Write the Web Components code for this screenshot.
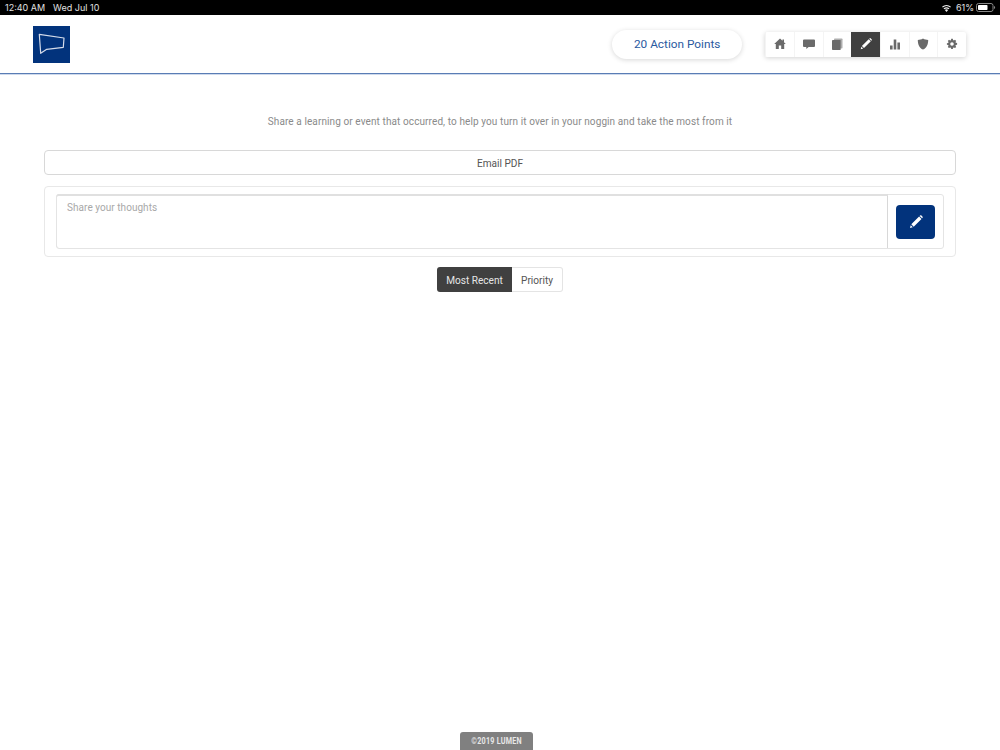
<!DOCTYPE html>
<html>
<head>
<meta charset="utf-8">
<title>Lumen</title>
<style>
  html, body { margin: 0; height: 100%; background: #fff; }
  body { font-family: Roboto, "Liberation Sans", sans-serif; }
</style>
</head>
<body>
<app-page>
  <status-bar></status-bar>
  <app-header></app-header>
  <journal-view></journal-view>
  <app-footer>©2019 LUMEN</app-footer>
</app-page>

<script>
class AppPage extends HTMLElement {
  constructor() {
    super();
    this.attachShadow({ mode: "open" });
    this.shadowRoot.innerHTML = `
      <style>
        :host { display: flex; flex-direction: column; height: 750px; overflow: hidden; }
        ::slotted(journal-view) { flex: 1; }
      </style>
      <slot></slot>`;
  }
}

class StatusBar extends HTMLElement {
  constructor() {
    super();
    this.attachShadow({ mode: "open" });
    this.shadowRoot.innerHTML = `
      <style>
        :host {
          display: flex; align-items: center; justify-content: space-between;
          height: 15px; background: #000; color: #e0e0e0;
          font: 9px/15px "Inter", "Liberation Sans", sans-serif;
          padding: 0 4px 0 5px;
        }
        .left span + span { margin-left: 8px; }
        .right { display: flex; align-items: center; }
        .right span { margin: 0 2px 0 4px; }
        svg { display: block; }
      </style>
      <div class="left"><span>12:40 AM</span><span>Wed Jul 10</span></div>
      <div class="right">
        <svg width="11" height="8" viewBox="0 0 11 8">
          <path d="M5.5 8 3.9 6a2.4 2.4 0 0 1 3.2 0Z" fill="#eee"/>
          <path d="M2.9 4.9a4 4 0 0 1 5.2 0M1.4 3.1a6.2 6.2 0 0 1 8.2 0" fill="none" stroke="#eee" stroke-width="1.2"/>
        </svg>
        <span>61%</span>
        <svg width="20" height="9" viewBox="0 0 20 9">
          <rect x=".5" y=".5" width="16.5" height="8" rx="2" fill="none" stroke="#888"/>
          <rect x="2" y="2" width="9.5" height="5" rx=".8" fill="#fff"/>
          <path d="M18 3v3a1.6 1.6 0 0 0 0-3Z" fill="#888"/>
        </svg>
      </div>`;
  }
}

class AppLogo extends HTMLElement {
  constructor() {
    super();
    this.attachShadow({ mode: "open" });
    this.shadowRoot.innerHTML = `
      <style>
        :host { display: block; width: 37px; height: 37px; background: #02337c; }
        svg { display: block; }
      </style>
      <svg width="37" height="37" viewBox="0 0 37 37">
        <path d="M6.300 8.300 31 12 30.300 21.300 13.700 23.300 7.700 27.300Z" fill="none" stroke="#d5dcea" stroke-width="1.2" stroke-linejoin="round"/>
      </svg>`;
  }
}

class NavIcons extends HTMLElement {
  constructor() {
    super();
    this.attachShadow({ mode: "open" });
    const icons = [
      `<path d="M7 1.500 1.200 7h1.600v5h3V8.600h2.400V12h3V7h1.600L11 5.200V2.500H9.500v1.300Z"/>`,
      `<path d="M2 2.500h10a1 1 0 0 1 1 1v5.600a1 1 0 0 1-1 1H6.600l-2.300 2v-2H2a1 1 0 0 1-1-1V3.500a1 1 0 0 1 1-1Z"/>`,
      `<rect x="4" y="1.500" width="8.500" height="10" rx=".8" opacity=".55"/><path d="M2.800 3h7.200a.6.600 0 0 1 .6.600v8.800a.6.600 0 0 1-.6.600H2.800a.8.800 0 0 1-.8-.8V3.800a.8.800 0 0 1 .8-.8Z"/>`,
      `<path d="M9.700 2.200 11.800 4.300 5 11.100 2.900 9ZM10.500 1.400a.9.900 0 0 1 1.300 0l.8.800a.9.900 0 0 1 0 1.300l-.3.300-2.100-2.100ZM2.400 9.800 4.200 11.600 1.700 12.300Z"/>`,
      `<path d="M2 8.500h2.600V12.500H2ZM5.700 2.500h2.600v10H5.700ZM9.400 5.500H12v7H9.400Z"/>`,
      `<path d="M7 1.500c1.700 1 3.400 1.300 5.200 1.400 0 4.400-1.400 7.900-5.200 9.700C3.200 10.800 1.800 7.300 1.800 2.900 3.600 2.800 5.300 2.500 7 1.500Z"/>`,
      `<path fill-rule="evenodd" d="M6.200 1.800h1.600l.3 1.300.8.300 1.100-.7 1.200 1.200-.7 1.100.3.800 1.300.3v1.600l-1.300.3-.3.800.7 1.100-1.200 1.200-1.100-.7-.8.300-.3 1.300H6.200l-.3-1.300-.8-.3-1.100.7-1.200-1.200.7-1.100-.3-.8-1.300-.3V6.200l1.300-.3.300-.8-.7-1.100 1.200-1.200 1.100.7.800-.3ZM7 5.200a1.800 1.800 0 1 0 0 3.600 1.800 1.800 0 0 0 0-3.600Z"/>`
    ];
    const cells = icons.map((d, i) =>
      `<div class="cell${i === 3 ? " on" : ""}"><svg width="14" height="14" viewBox="0 0 14 14">${d}</svg></div>`).join("");
    this.shadowRoot.innerHTML = `
      <style>
        :host {
          display: flex; height: 25px; background: #fff; border-radius: 2px;
          box-shadow: 0 1px 5px rgba(0,0,0,.18);
        }
        .cell {
          width: 28.7px; display: flex; align-items: center; justify-content: center;
          fill: #6a6a6a; border-left: 1px solid #f4f4f4; box-sizing: border-box;
        }
        .cell:first-child { border-left: 0; }
        .on { background: #404040; fill: #fff; border-left: 0; }
      </style>
      ${cells}`;
  }
}

class AppHeader extends HTMLElement {
  constructor() {
    super();
    this.attachShadow({ mode: "open" });
    this.shadowRoot.innerHTML = `
      <style>
        :host {
          display: flex; align-items: center; box-sizing: border-box;
          height: 59px; padding: 0 34px 0 33px; border-bottom: 1px solid #5a7db5;
          box-shadow: 0 1px 0 #cfdaec;
        }
        app-logo { margin: 0 auto 0 0; }
        .points {
          width: 130px; height: 29px; line-height: 29px; margin-right: 23px; text-align: center;
          border-radius: 15px; color: #2a5aa0; font-size: 11.8px;
          box-shadow: 0 1px 5px rgba(0,0,0,.16);
        }
      </style>
      <app-logo></app-logo>
      <div class="points">20 Action Points</div>
      <nav-icons></nav-icons>`;
  }
}

class ThoughtBox extends HTMLElement {
  constructor() {
    super();
    this.attachShadow({ mode: "open" });
    this.shadowRoot.innerHTML = `
      <style>
        :host {
          display: block; box-sizing: border-box; height: 71px; padding: 7px 11px 0;
          border: 1px solid #e8e8e8; border-radius: 4px;
        }
        .row {
          display: flex; height: 55px; box-sizing: border-box;
          border: 1px solid #e4e4e4; border-radius: 3px;
        }
        .input {
          flex: 1; box-sizing: border-box; padding: 5px 10px;
          border-top: 2px solid #e0e0e0; border-left: 1px solid #e4e4e4;
          border-radius: 3px 0 0 3px; margin: -1px 0 0 -1px;
          border-right: 1px solid #d8d8d8;
          font-size: 10px; line-height: 14px; letter-spacing: .05px; color: #a8a8a8;
        }
        .action { width: 55px; display: flex; align-items: center; justify-content: center; }
        .btn {
          width: 39px; height: 34px; margin-top: 1px; border-radius: 4px; background: #02337c;
          display: flex; align-items: center; justify-content: center; fill: #fff;
        }
        svg { display: block; }
      </style>
      <div class="row">
        <div class="input">Share your thoughts</div>
        <div class="action"><div class="btn">
          <svg width="16" height="16" viewBox="0 0 14 14">
            <path d="M9.700 2.200 11.800 4.300 5 11.100 2.900 9ZM10.500 1.400a.9.900 0 0 1 1.300 0l.8.800a.9.900 0 0 1 0 1.300l-.3.300-2.100-2.100ZM2.400 9.800 4.200 11.600 1.700 12.300Z"/>
          </svg>
        </div></div>
      </div>`;
  }
}

class SortToggle extends HTMLElement {
  constructor() {
    super();
    this.attachShadow({ mode: "open" });
    this.shadowRoot.innerHTML = `
      <style>
        :host {
          display: flex; width: 126px; height: 25px; box-sizing: border-box;
          font-size: 10.1px; line-height: 27px; text-align: center;
        }
        div { box-sizing: border-box; }
        .on { width: 75px; background: #404040; color: #e6e6e6; border-radius: 3px 0 0 3px; }
        .off {
          flex: 1; line-height: 25px; color: #555; border: 1px solid #e4e4e4; border-left: 0;
          border-radius: 0 3px 3px 0;
        }
      </style>
      <div class="on">Most Recent</div>
      <div class="off">Priority</div>`;
  }
}

class JournalView extends HTMLElement {
  constructor() {
    super();
    this.attachShadow({ mode: "open" });
    this.shadowRoot.innerHTML = `
      <style>
        :host { display: block; padding: 0 44px; }
        p {
          margin: 41px 0 0; text-align: center; color: #8a8a8a; height: 14px;
          font-size: 10px; line-height: 14px; letter-spacing: .1px;
        }
        .email {
          margin-top: 21px; height: 25px; box-sizing: border-box; text-align: center;
          border: 1px solid #d8d8d8; border-radius: 4px; color: #555;
          font-size: 10.1px; line-height: 25px;
        }
        thought-box { margin-top: 11px; }
        sort-toggle { margin: 10px auto 0; }
      </style>
      <p>Share a learning or event that occurred, to help you turn it over in your noggin and take the most from it</p>
      <div class="email">Email PDF</div>
      <thought-box></thought-box>
      <sort-toggle></sort-toggle>`;
  }
}

class AppFooter extends HTMLElement {
  constructor() {
    super();
    this.attachShadow({ mode: "open" });
    this.shadowRoot.innerHTML = `
      <style>
        :host {
          display: block; align-self: flex-start; margin-left: 460px; margin-top: -18px;
          width: 73px; height: 18px; box-sizing: border-box; background: #808080; color: #e8e8e8;
          border-radius: 3px 3px 0 0; text-align: center;
          font-size: 9px; font-weight: 700; line-height: 19px; letter-spacing: .3px;
        }
        span { display: inline-block; transform: scaleX(.8); white-space: nowrap; }
      </style>
      <span><slot></slot></span>`;
  }
}

customElements.define("app-page", AppPage);
customElements.define("status-bar", StatusBar);
customElements.define("app-logo", AppLogo);
customElements.define("nav-icons", NavIcons);
customElements.define("app-header", AppHeader);
customElements.define("thought-box", ThoughtBox);
customElements.define("sort-toggle", SortToggle);
customElements.define("journal-view", JournalView);
customElements.define("app-footer", AppFooter);
</script>
</body>
</html>
